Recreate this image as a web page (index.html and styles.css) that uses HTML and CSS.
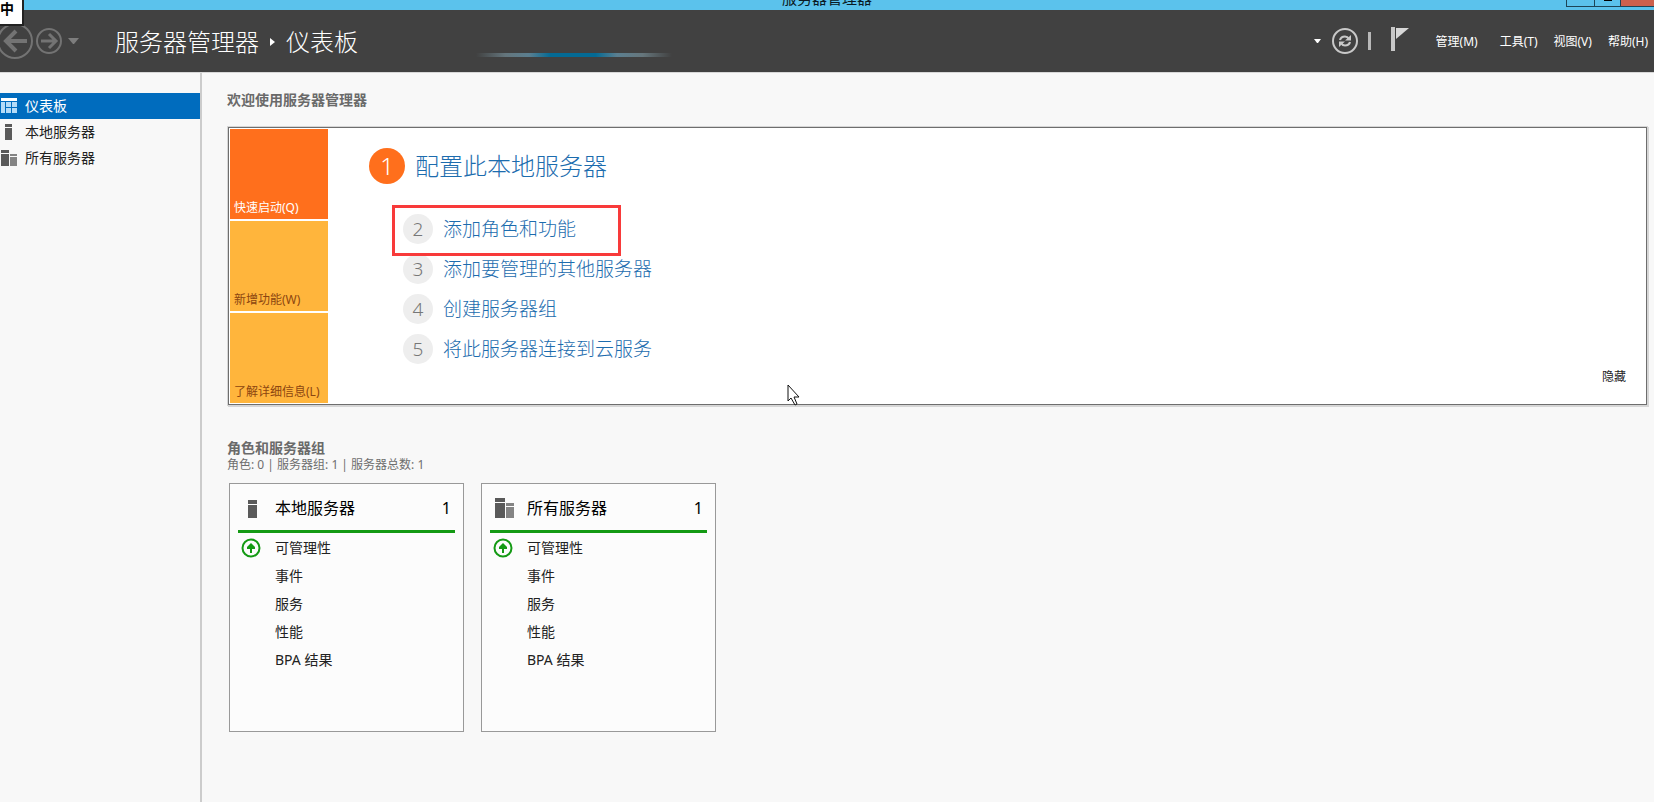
FILE: index.html
```html
<!DOCTYPE html>
<html lang="zh-CN">
<head>
<meta charset="utf-8">
<title>服务器管理器</title>
<link rel="stylesheet" href="styles.css">
</head>
<body>
<div class="ime">中</div>
<div class="titlebar">
  <span class="titlebar-text">服务器管理器</span>
  <div class="window-buttons">
    <button class="win-btn" aria-label="最小化"></button>
    <button class="win-btn win-max" aria-label="最大化"></button>
    <button class="win-btn win-close" aria-label="关闭"></button>
  </div>
</div>

<header class="header">
  <div class="history">
    <button class="icon-btn" aria-label="后退">
      <svg width="34" height="36" viewBox="0 0 34 36"><circle cx="15" cy="18" r="17" fill="none" stroke="#737373" stroke-width="2"/><path d="M27 18H6M16 8L6 18L16 28" fill="none" stroke="#737373" stroke-width="4"/></svg>
    </button>
    <button class="icon-btn" aria-label="前进">
      <svg width="26" height="26" viewBox="0 0 26 26"><circle cx="13" cy="13" r="12" fill="none" stroke="#737373" stroke-width="2"/><path d="M5 13H20M13 6L20 13L13 20" fill="none" stroke="#737373" stroke-width="3"/></svg>
    </button>
    <button class="icon-btn" aria-label="历史记录">
      <svg width="12" height="6" viewBox="0 0 12 6"><path d="M0 0H11L6 6H5Z" fill="#7d7d7d"/></svg>
    </button>
  </div>
  <h1 class="crumbs"><span>服务器管理器</span>
    <svg width="5" height="8" viewBox="0 0 5 8"><path d="M0 0L5 4L0 8Z" fill="#fff"/></svg>
    <span>仪表板</span></h1>
  <div class="progress"></div>
  <div class="tools">
    <button class="icon-btn" aria-label="更多">
      <svg width="8" height="5" viewBox="0 0 8 5"><path d="M0 0H7L4 4H3Z" fill="#fff"/></svg>
    </button>
    <button class="icon-btn refresh" aria-label="刷新">
      <svg width="26" height="26" viewBox="0 0 26 26"><circle cx="13" cy="13" r="12" fill="none" stroke="#c8c8c8" stroke-width="2"/><path d="M8 12Q9 8.500 13 8.500Q15.500 8.500 17 11M18 14Q17 17.500 13 17.500Q10.500 17.500 9 15" fill="none" stroke="#c8c8c8" stroke-width="2.200"/><path d="M19 7V12.500H13ZM7 19V13.500H13Z" fill="#c8c8c8"/></svg>
    </button>
    <span class="divider"></span>
    <button class="icon-btn flag" aria-label="通知">
      <svg width="18" height="25" viewBox="0 0 18 25"><path d="M0 0H4V24H0Z" fill="#c8c8c8"/><path d="M5 1H18L5 12Z" fill="#d8d8d8"/></svg>
    </button>
    <nav class="menu">
      <button class="menu-btn wide">管理(M)</button>
      <button class="menu-btn">工具(T)</button>
      <button class="menu-btn">视图(V)</button>
      <button class="menu-btn">帮助(H)</button>
    </nav>
  </div>
</header>

<div class="body">
  <nav class="sidebar">
    <a class="side-item selected" href="#dashboard">
      <svg width="17" height="16" viewBox="0 0 17 16"><path d="M1 0H17V3H1Z" fill="#fff"/><path d="M1 4H5V15H1ZM6 4H11V9H6ZM12 4H17V9H12ZM6 10H11V15H6ZM12 10H17V15H12Z" fill="#b5dcf8"/></svg>
      仪表板</a>
    <a class="side-item" href="#local">
      <svg width="17" height="16" viewBox="0 0 17 16"><path d="M5 0H12V3H5ZM5 4H12V16H5Z" fill="#5a5a5a"/></svg>
      本地服务器</a>
    <a class="side-item" href="#all">
      <svg width="17" height="16" viewBox="0 0 17 16"><path d="M1 0H9V3H1ZM1 4H9V16H1Z" fill="#5a5a5a"/><path d="M10 4H17V6H10ZM10 7H17V16H10Z" fill="#848484"/></svg>
      所有服务器</a>
  </nav>

  <main class="main">
    <h2 class="heading">欢迎使用服务器管理器</h2>
    <section class="welcome">
      <div class="tabs">
        <button class="tab active">快速启动(Q)</button>
        <button class="tab">新增功能(W)</button>
        <button class="tab">了解详细信息(L)</button>
      </div>
      <div class="steps">
        <a class="step first" href="#s1"><span class="num">1</span>配置此本地服务器</a>
        <a class="step marked" href="#s2"><span class="num">2</span>添加角色和功能</a>
        <a class="step" href="#s3"><span class="num">3</span>添加要管理的其他服务器</a>
        <a class="step" href="#s4"><span class="num">4</span>创建服务器组</a>
        <a class="step" href="#s5"><span class="num">5</span>将此服务器连接到云服务</a>
      </div>
      <button class="hide">隐藏</button>
    </section>

    <h2 class="heading groups">角色和服务器组</h2>
    <p class="summary">角色: 0 | 服务器组: 1 | 服务器总数: 1</p>
    <div class="cards">
      <article class="card">
        <h3 class="card-head">
          <svg width="20" height="20" viewBox="0 0 20 20"><path d="M6 2H15V6H6ZM6 7H15V20H6Z" fill="#5a5a5a"/></svg>
          <span class="card-title">本地服务器</span><span>1</span></h3>
        <ul class="rows">
          <li class="row"><svg class="up" width="20" height="20" viewBox="0 0 20 20"><circle cx="10" cy="10" r="8.500" fill="none" stroke="#149a14" stroke-width="2"/><path d="M10 5L14 9V11H11V15H9V11H6V9Z" fill="#149a14"/></svg>可管理性</li>
          <li class="row">事件</li>
          <li class="row">服务</li>
          <li class="row">性能</li>
          <li class="row">BPA 结果</li>
        </ul>
      </article>
      <article class="card">
        <h3 class="card-head">
          <svg width="20" height="20" viewBox="0 0 20 20"><path d="M1 0H11V4H1ZM1 5H11V20H1Z" fill="#5a5a5a"/><path d="M12 5H20V8H12ZM12 9H20V20H12Z" fill="#848484"/></svg>
          <span class="card-title">所有服务器</span><span>1</span></h3>
        <ul class="rows">
          <li class="row"><svg class="up" width="20" height="20" viewBox="0 0 20 20"><circle cx="10" cy="10" r="8.500" fill="none" stroke="#149a14" stroke-width="2"/><path d="M10 5L14 9V11H11V15H9V11H6V9Z" fill="#149a14"/></svg>可管理性</li>
          <li class="row">事件</li>
          <li class="row">服务</li>
          <li class="row">性能</li>
          <li class="row">BPA 结果</li>
        </ul>
      </article>
    </div>
  </main>
</div>
<svg class="cursor" width="13" height="22" viewBox="0 0 13 22"><path d="M1 1V17L4 14L8 21L10 20L7 13H12Z" fill="#fff" stroke="#111" stroke-width="1"/></svg>
</body>
</html>
```
FILE: styles.css
```css
*, *::before, *::after { box-sizing: border-box; }

body {
  margin: 0;
  min-height: 100vh;
  display: flex;
  flex-direction: column;
  background: #f8f8f8;
  color: #222;
  font-family: "Noto Sans", "Noto Sans CJK SC", sans-serif;
  font-size: 14px;
  line-height: 20px;
}

button {
  margin: 0;
  padding: 0;
  border: 0;
  background: none;
  color: inherit;
  font: inherit;
}

a { color: inherit; text-decoration: none; }
h1, h2, h3, p, ul { margin: 0; padding: 0; }
ul { list-style: none; }
svg { display: block; flex: none; }

.ime {
  position: absolute;
  top: 0;
  left: 0;
  z-index: 2;
  width: 24px;
  height: 26px;
  border: solid #222;
  border-width: 0 2px 2px 0;
  background: #fff;
  color: #000;
  font-weight: 700;
  line-height: 18px;
}

.titlebar {
  position: relative;
  display: flex;
  justify-content: center;
  align-items: flex-end;
  height: 10px;
  padding-bottom: 4px;
  overflow: hidden;
  background: #5bc2ec;
  color: #0a1a24;
}

.titlebar-text { font-size: 15px; line-height: 16px; }

.window-buttons {
  position: absolute;
  top: 0;
  right: 0;
  display: flex;
  height: 7px;
}

.win-btn {
  width: 28px;
  border: solid #1d4557;
  border-width: 0 0 1px 1px;
}

.win-max { width: 26px; }

.win-max::before {
  content: "";
  display: block;
  width: 8px;
  height: 1px;
  margin: 0 auto 5px;
  background: #000;
}

.win-close { width: 34px; background: #cd614d; }

.header {
  display: flex;
  align-items: center;
  height: 63px;
  border-bottom: 1px solid #d8d8d8;
  background: #414141;
  color: #fff;
}

.history { display: flex; align-items: center; gap: 2px; width: 115px; }
.history .icon-btn:last-child { margin-left: 4px; }

.crumbs {
  display: flex;
  align-items: center;
  gap: 11px;
  padding-top: 2px;
  font-size: 24px;
  font-weight: 300;
  line-height: 32px;
}

.progress {
  align-self: flex-end;
  width: 196px;
  height: 4px;
  margin: 0 0 15px 118px;
  background: linear-gradient(90deg, #414141, #64757c 15%, #5b7f90 27%, #046a94 38%, #046a94 61%, #5b7f90 72%, #66767c 85%, #414141);
}

.tools { display: flex; align-items: center; margin-left: auto; padding-right: 6px; }
.refresh { margin-left: 10px; }
.divider { width: 3px; height: 18px; margin: 0 20px 0 10px; background: #b8b8b8; }
.flag { margin-bottom: 4px; }
.menu { display: flex; gap: 16px; margin-left: 27px; padding-top: 2px; }
.menu-btn { font-size: 12px; }
.menu-btn.wide { margin-right: 6px; }

.body { display: flex; flex: 1; }

.sidebar {
  flex: none;
  width: 202px;
  padding-top: 20px;
  border-right: 2px solid #ccc;
}

.side-item { display: flex; align-items: center; gap: 8px; height: 26px; }
.side-item.selected { background: #006cbe; color: #fff; }

.main { flex: 1; min-width: 0; padding: 17px 7px 20px 25px; }

.heading { color: #6a6a6a; font-size: 14px; line-height: 20px; }

.welcome {
  display: flex;
  margin: 17px 0 0 1px;
  padding: 1px;
  border: 1px solid #6e6e6e;
  background: #fff;
  box-shadow: 0 0 0 1px #d6d6d6, 1px 1px 0 1px #d6d6d6;
}

.tabs { display: flex; flex-direction: column; gap: 2px; width: 98px; }

.tab {
  display: flex;
  align-items: flex-end;
  height: 90px;
  padding: 0 0 1px 4px;
  background: #ffb53c;
  color: #8c4510;
  font-size: 12px;
  white-space: nowrap;
}

.tab.active { background: #ff6f1c; color: #fff; }

.steps {
  display: flex;
  flex-direction: column;
  align-items: flex-start;
  gap: 10px;
  flex: 1;
  padding: 19px 0 0 41px;
}

.step {
  position: relative;
  display: flex;
  align-items: center;
  gap: 10px;
  margin-left: 34px;
  color: #1c6cae;
  font-size: 19px;
  font-weight: 300;
}

.num {
  width: 30px;
  border-radius: 50%;
  background: #eee;
  color: #777;
  line-height: 30px;
  text-align: center;
}

.step.first { margin: 0 0 20px; font-size: 24px; }
.first .num { width: 36px; background: #ff6f1c; color: #fff; line-height: 36px; }

.marked { z-index: 1; }

.marked::after {
  content: "";
  position: absolute;
  top: -9px;
  left: -11px;
  width: 229px;
  height: 51px;
  border: 3px solid #f83a3a;
}

.hide { align-self: flex-end; margin: 0 19px 16px 0; font-size: 12px; }

.groups { margin-top: 33px; }
.summary { color: #6e6e6e; font-size: 12px; line-height: 14px; }

.cards { display: flex; gap: 17px; margin: 11px 0 0 2px; }

.card {
  width: 235px;
  height: 249px;
  padding: 0 8px;
  border: 1px solid #999;
  background: #fcfcfc;
}

.card-head {
  display: flex;
  align-items: center;
  gap: 13px;
  height: 49px;
  padding: 2px 4px 0;
  border-bottom: 3px solid #149a14;
  color: #000;
  font-size: 16px;
  font-weight: 400;
}

.card-title { flex: 1; }

.row {
  position: relative;
  padding: 5px 0 3px 37px;
}

.up { position: absolute; top: 5px; left: 3px; }

.cursor { position: absolute; left: 787px; top: 384px; }
```
